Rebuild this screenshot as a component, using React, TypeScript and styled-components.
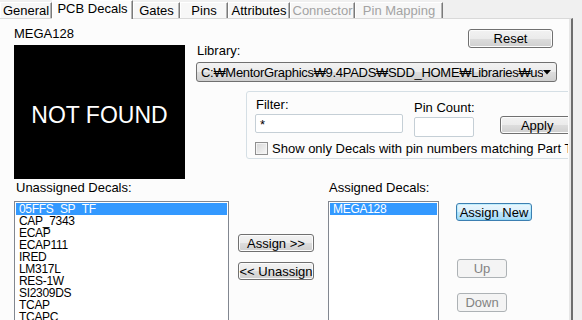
import React from "react";
import styled, { createGlobalStyle, css } from "styled-components";

const GlobalStyle = createGlobalStyle`
    body {
        margin: 0;
        font-family: "Liberation Sans", Arial, sans-serif;
        font-size: 13px;
        color: #000;
    }
`;

const Window = styled.div`
    width: 582px;
    height: 320px;
    overflow: hidden;
    background: #f0f0f0;
    display: flex;
    flex-direction: column;
`;

const TabStrip = styled.div`
    display: flex;
    align-items: flex-end;
    height: 18px;
`;

const Tab = styled.div<{ $width: number; $active?: boolean; $disabled?: boolean }>`
    box-sizing: border-box;
    width: ${(p) => p.$width}px;
    height: ${(p) => (p.$active ? 19 : 16)}px;
    margin-bottom: ${(p) => (p.$active ? -1 : 0)}px;
    display: flex;
    align-items: center;
    justify-content: center;
    background: ${(p) => (p.$active ? "#fcfcfc" : "#f7f7f7")};
    border-top: 1px solid #ffffff;
    border-left: 1px solid #ffffff;
    border-right: 1px solid #7a7a7a;
    box-shadow: inset -1px 0 #b4b4b4;
    color: ${(p) => (p.$disabled ? "#a3a3a3" : "#000")};
    padding-bottom: ${(p) => (p.$active ? 3 : 0)}px;
    white-space: nowrap;
    position: relative;
    z-index: ${(p) => (p.$active ? 1 : 0)};
`;

const Panel = styled.div`
    box-sizing: border-box;
    width: 573px;
    flex: 1;
    background: #fcfcfc;
    border-top: 1px solid #d9d9d9;
    border-right: 2px solid #6e6e6e;
    box-shadow: inset -2px 0 #e6e6e6;
    overflow: hidden;
`;

const Content = styled.div`
    width: 568px;
    overflow: hidden;
    display: flex;
    flex-direction: column;
`;

const TopRow = styled.div`
    display: flex;
    padding-left: 14px;
`;

const PreviewColumn = styled.div`
    width: 171px;
    display: flex;
    flex-direction: column;
`;

const Caption = styled.div<{ $indent?: number }>`
    line-height: 13px;
    height: 13px;
    margin-left: ${(p) => p.$indent ?? 0}px;
    white-space: nowrap;
`;

const Preview = styled.div`
    margin-top: 5px;
    height: 134px;
    background: #000;
    color: #fff;
    display: flex;
    align-items: center;
    justify-content: center;
    font-size: 23px;
    padding-top: 6px;
    box-sizing: border-box;
`;

const LibraryColumn = styled.div`
    margin-left: 11px;
    width: 361px;
    display: flex;
    flex-direction: column;
`;

const LibraryHeader = styled.div`
    display: flex;
    justify-content: space-between;
    align-items: flex-start;
    height: 39px;
    padding-top: 4px;
    box-sizing: border-box;
`;

const buttonBase = css`
    box-sizing: border-box;
    display: flex;
    align-items: center;
    justify-content: center;
    border-radius: 3px;
    font-family: inherit;
    font-size: 13px;
    white-space: nowrap;
    padding: 0;
    flex-shrink: 0;
`;

type Tone = "normal" | "focus" | "disabled";

const Button = styled.div<{ $w: number; $h?: number; $tone?: Tone; $top?: number; $left?: number }>`
    ${buttonBase};
    width: ${(p) => p.$w}px;
    height: ${(p) => p.$h ?? 19}px;
    margin-top: ${(p) => p.$top ?? 0}px;
    margin-left: ${(p) => p.$left ?? 0}px;
    ${(p) =>
        p.$tone === "focus"
            ? css`
                  border: 1px solid #3c7fb1;
                  background: linear-gradient(#eaf6fd 0%, #d9f0fc 50%, #bee6fd 51%, #a7d9f5 100%);
                  box-shadow: inset 0 0 0 1px #48d7fb40;
              `
            : p.$tone === "disabled"
              ? css`
                    border: 1px solid #adb2b5;
                    background: #f4f4f4;
                    color: #838383;
                `
              : css`
                    border: 1px solid #707070;
                    background: linear-gradient(#f2f2f2 0%, #ebebeb 50%, #dddddd 51%, #cfcfcf 100%);
                    box-shadow: inset 0 0 0 1px #fcfcfc;
                `}
`;

const Combo = styled.div`
    box-sizing: border-box;
    margin-top: 4px;
    height: 20px;
    border: 1px solid #707070;
    border-radius: 3px;
    background: linear-gradient(#f2f2f2 0%, #ebebeb 50%, #dddddd 51%, #cfcfcf 100%);
    display: flex;
    align-items: center;
    padding: 0 5px 0 4px;
    white-space: nowrap;
`;

const ComboText = styled.span`
    flex: 1;
    overflow: hidden;
    letter-spacing: -0.3px;
`;

const GroupBox = styled.div`
    box-sizing: border-box;
    margin-top: 9px;
    margin-left: 50px;
    width: 340px;
    height: 68px;
    border: 1px solid #d5dfe5;
    border-radius: 3px;
    padding: 3px 0 0 8px;
    display: flex;
    flex-direction: column;
`;

const FilterRow = styled.div`
    display: flex;
    align-items: flex-start;
`;

const Field = styled.div<{ $left?: number; $top?: number }>`
    display: flex;
    flex-direction: column;
    margin-left: ${(p) => p.$left ?? 0}px;
    margin-top: ${(p) => p.$top ?? 0}px;
`;

const TextBox = styled.div<{ $w: number; $h: number; $top: number }>`
    box-sizing: border-box;
    width: ${(p) => p.$w}px;
    height: ${(p) => p.$h}px;
    margin-top: ${(p) => p.$top}px;
    border: 1px solid #c5cfd6;
    border-radius: 2px;
    background: #fff;
    padding: 3px 0 0 4px;
    line-height: 13px;
`;

const CheckRow = styled.div`
    display: flex;
    align-items: center;
    margin-top: 4px;
    white-space: nowrap;
`;

const CheckBox = styled.span`
    box-sizing: border-box;
    width: 13px;
    height: 13px;
    border: 1px solid #8f8f8f;
    background: linear-gradient(135deg, #d6d6d6, #f8f8f8);
    box-shadow: inset 0 0 0 1px #f4f4f4;
    margin-right: 4px;
    flex-shrink: 0;
`;

const BottomRow = styled.div`
    display: flex;
    align-items: flex-start;
    padding-left: 14px;
    margin-top: 2px;
`;

const ListColumn = styled.div<{ $w: number; $left?: number }>`
    display: flex;
    flex-direction: column;
    width: ${(p) => p.$w}px;
    margin-left: ${(p) => p.$left ?? 0}px;
`;

const ListBox = styled.div`
    box-sizing: border-box;
    margin-top: 7px;
    height: 140px;
    border: 1px solid #828790;
    background: #fff;
    padding: 1px;
`;

const ListItem = styled.div<{ $selected?: boolean }>`
    font-family: "Liberation Sans", Arial, sans-serif;
    font-size: 12px;
    letter-spacing: -0.3px;
    line-height: 12px;
    height: 12px;
    padding-left: 3px;
    white-space: nowrap;
    background: ${(p) => (p.$selected ? "#3399ff" : "transparent")};
    color: ${(p) => (p.$selected ? "#fff" : "#000")};
`;

const ButtonColumn = styled.div<{ $left: number }>`
    display: flex;
    flex-direction: column;
    margin-left: ${(p) => p.$left}px;
`;

const tabs = [
    { label: "General", width: 52 },
    { label: "PCB Decals", width: 81, active: true },
    { label: "Gates", width: 47 },
    { label: "Pins", width: 48 },
    { label: "Attributes", width: 62 },
    { label: "Connector", width: 65, disabled: true },
    { label: "Pin Mapping", width: 88, disabled: true },
];

const unassigned = [
    "05FFS_SP_TF",
    "CAP_7343",
    "ECAP",
    "ECAP111",
    "IRED",
    "LM317L",
    "RES-1W",
    "SI2309DS",
    "TCAP",
    "TCAPC",
    "TSSOP",
];

const DropArrow = () => (
    <svg width="8" height="5" viewBox="0 0 8 5">
        <path d="M0 0 H8 L4 4.5 Z" fill="#000" />
    </svg>
);

const App = () => {
    return (
        <Window>
            <GlobalStyle />
            <TabStrip>
                {tabs.map((t) => (
                    <Tab key={t.label} $width={t.width} $active={t.active} $disabled={t.disabled}>
                        {t.label}
                    </Tab>
                ))}
            </TabStrip>
            <Panel>
                <Content>
                    <TopRow>
                        <PreviewColumn>
                            <Caption style={{ marginTop: 8 }}>MEGA128</Caption>
                            <Preview>NOT FOUND</Preview>
                        </PreviewColumn>
                        <LibraryColumn>
                            <LibraryHeader>
                                <Caption $indent={1} style={{ marginTop: 21 }}>
                                    Library:
                                </Caption>
                                <Button $w={85} style={{ marginTop: 6, marginRight: 4 }}>
                                    Reset
                                </Button>
                            </LibraryHeader>
                            <Combo>
                                <ComboText>C:₩MentorGraphics₩9.4PADS₩SDD_HOME₩Libraries₩us</ComboText>
                                <DropArrow />
                            </Combo>
                            <GroupBox>
                                <FilterRow>
                                    <Field>
                                        <Caption $indent={1} style={{ marginTop: 3 }}>
                                            Filter:
                                        </Caption>
                                        <TextBox $w={148} $h={19} $top={3}>
                                            *
                                        </TextBox>
                                    </Field>
                                    <Field $left={11} $top={6}>
                                        <Caption>Pin Count:</Caption>
                                        <TextBox $w={60} $h={20} $top={3} />
                                    </Field>
                                    <Button $w={75} $h={18} $left={25} $top={21}>
                                        Apply
                                    </Button>
                                </FilterRow>
                                <CheckRow>
                                    <CheckBox />
                                    Show only Decals with pin numbers matching Part Type
                                </CheckRow>
                            </GroupBox>
                        </LibraryColumn>
                    </TopRow>
                    <BottomRow>
                        <ListColumn $w={215}>
                            <Caption $indent={2}>Unassigned Decals:</Caption>
                            <ListBox>
                                {unassigned.map((name, i) => (
                                    <ListItem key={name} $selected={i === 0}>
                                        {name}
                                    </ListItem>
                                ))}
                            </ListBox>
                        </ListColumn>
                        <ButtonColumn $left={9}>
                            <Button $w={76} $h={18} $top={53}>
                                Assign &gt;&gt;
                            </Button>
                            <Button $w={76} $h={18} $top={10}>
                                &lt;&lt; Unassign
                            </Button>
                        </ButtonColumn>
                        <ListColumn $w={111} $left={14}>
                            <Caption $indent={1}>Assigned Decals:</Caption>
                            <ListBox>
                                <ListItem $selected>MEGA128</ListItem>
                            </ListBox>
                        </ListColumn>
                        <ButtonColumn $left={17}>
                            <Button $w={76} $h={18} $top={22} $tone="focus">
                                Assign New
                            </Button>
                            <Button $w={50} $h={19} $top={38} $left={1} $tone="disabled">
                                Up
                            </Button>
                            <Button $w={50} $h={19} $top={15} $left={1} $tone="disabled">
                                Down
                            </Button>
                        </ButtonColumn>
                    </BottomRow>
                </Content>
            </Panel>
        </Window>
    );
};

export default App;
